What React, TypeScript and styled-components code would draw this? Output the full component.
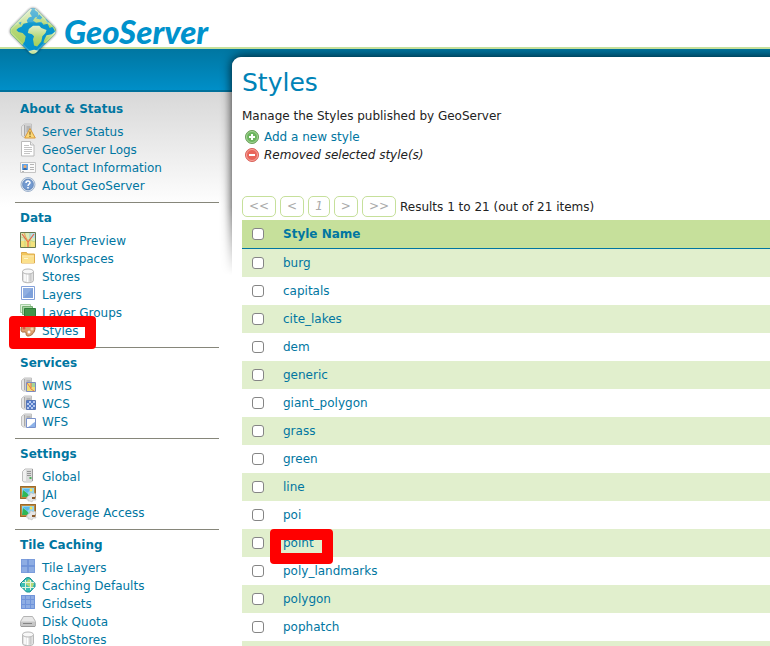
import React from "react";
import styled, { createGlobalStyle } from "styled-components";

const GlobalStyle = createGlobalStyle`
  * { box-sizing: border-box; }
  body {
    margin: 0;
    background: #fff;
    color: #222;
    font: 12px/18px "DejaVu Sans", Verdana, sans-serif;
  }
`;

const Page = styled.div`
  height: 100vh;
  overflow: hidden;
`;

const TopBar = styled.header`
  height: 49px;
  padding: 6px 8px 0;
  border-bottom: 2px solid #c6e09b;
  background: #fff;
`;

const Brand = styled.a`
  position: relative;
  z-index: 1;
  display: flex;
  align-items: center;
  gap: 6px;
  height: 50px;
  color: #0092cc;
  font: italic 900 33px/50px Lato, sans-serif;
  text-decoration: none;
`;

const Band = styled.div`
  height: 43px;
  border-bottom: 2px solid #00719b;
  background: linear-gradient(#0076a1, #008fc8);
`;

const Columns = styled.div`
  display: flex;
  align-items: flex-start;
  background: linear-gradient(#d8d8d8, #fff 115px);
`;

const Sidebar = styled.nav`
  flex: 0 0 232px;
  padding: 8px 13px 0 15px;
`;

const Section = styled.section`
  padding: 0 5px 7px;
  & + & {
    padding-top: 6px;
    border-top: 1px solid #86867a;
  }
`;

const SectionTitle = styled.h2`
  margin: 0 0 5px;
  color: #0076a1;
  font-size: 12px;
  line-height: 18px;
`;

const List = styled.ul`
  margin: 0;
  padding: 0;
  list-style: none;
`;

const MenuItem = styled.li`
  position: relative;
  display: flex;
  gap: 6px;
  height: 18px;
`;

const Link = styled.a`
  color: #0076a1;
  text-decoration: none;
`;

const Highlight = styled.span<{ $wide?: boolean }>`
  position: absolute;
  z-index: 2;
  top: ${(p) => (p.$wide ? "-6px" : "-5px")};
  left: ${(p) => (p.$wide ? "-11px" : "-13px")};
  width: ${(p) => (p.$wide ? "87px" : "63px")};
  height: ${(p) => (p.$wide ? "33px" : "35px")};
  border: 11px solid #f00;
  border-radius: 4px;
  pointer-events: none;
`;

const Main = styled.main`
  position: relative;
  flex: 1;
  min-width: 0;
  margin-top: -35px;
  padding: 11px 0 0 10px;
  border-top-left-radius: 9px;
  background: #fff;
`;

const ShadowArea = styled.div`
  position: absolute;
  top: -8px;
  right: 0;
  left: -14px;
  height: 226px;
  overflow: hidden;
  pointer-events: none;
  mask-image: linear-gradient(#000 70%, transparent);
  &::before {
    content: "";
    display: block;
    height: 300px;
    margin: 8px -20px 0 14px;
    border-radius: 9px;
    background: #fff;
    box-shadow: 0 0 11px rgba(0, 0, 0, 0.85);
  }
`;

const Content = styled.div`
  position: relative;
`;

const Title = styled.h1`
  margin: 0 0 9px;
  color: #0083b7;
  font-size: 25px;
  font-weight: 400;
  line-height: 30px;
`;

const Intro = styled.p`
  margin: 0 0 3px;
`;

const Actions = styled(List)`
  margin-bottom: 32px;
`;

const Action = styled.li`
  display: flex;
  align-items: center;
  gap: 4px;
  height: 18px;
  padding-left: 2px;
`;

const Pager = styled.div`
  display: flex;
  align-items: center;
  gap: 4px;
  margin-bottom: 3px;
`;

const PageButton = styled.button`
  height: 21px;
  padding: 0 6px;
  border: 1px solid #c6e09b;
  border-radius: 5px;
  background: #fff;
  color: #aaa;
  font: italic 12px/19px "DejaVu Sans", sans-serif;
`;

const Table = styled.table`
  width: 100%;
  border-collapse: separate;
  border-spacing: 0;
`;

const HeadCell = styled.th`
  height: 29px;
  padding: 0;
  border-bottom: 1px solid #0076a1;
  background: #c6e09b;
  color: #0076a1;
  text-align: left;
`;

const Row = styled.tr`
  &:nth-child(odd) { background: #e1efcd; }
`;

const Cell = styled.td`
  height: 28px;
  padding: 0;
`;

const CheckHead = styled(HeadCell)`
  width: 41px;
`;

const CellInner = styled.div`
  position: relative;
  height: 18px;
`;

const Check = styled.input`
  display: block;
  width: 12px;
  height: 12px;
  margin: 0 0 0 10px;
  appearance: none;
  border: 1px solid #858585;
  border-radius: 3px;
  background: #fff;
`;

const Drawing = styled.svg`
  display: block;
  flex: none;
  overflow: visible;
`;

const Logo = () => (
  <Drawing width="50" height="50" viewBox="1 1 48 48" aria-hidden="true">
    <defs>
      <linearGradient id="sea" x1="0" y1="0" x2="0" y2="1">
        <stop offset="0" stopColor="#57b3d2" />
        <stop offset=".4" stopColor="#0b97cd" />
        <stop offset="1" stopColor="#0091cc" />
      </linearGradient>
      <linearGradient id="land" x1="0" y1="0" x2="0" y2="1">
        <stop offset="0" stopColor="#e2efc8" />
        <stop offset=".55" stopColor="#b5d878" />
        <stop offset="1" stopColor="#a3cf56" />
      </linearGradient>
      <clipPath id="gem">
        <rect x="8" y="8" width="34" height="34" rx="5" transform="rotate(45 25 25)" />
      </clipPath>
      <filter id="glow" x="-20%" y="-20%" width="140%" height="140%">
        <feGaussianBlur stdDeviation="1.2" />
      </filter>
    </defs>
    <rect x="8" y="8" width="34" height="34" rx="5" transform="rotate(45 25 25)" fill="#222" opacity=".7" filter="url(#glow)" />
    <g clipPath="url(#gem)">
      <path d="M0 0h50v50H0z" fill="url(#sea)" />
      <g fill="url(#land)">
        <path d="M1 23 5 18l6-6 4-4 5-5 4 1-2 4 2 3-3 1-2 3 1 2-4 1-2 3-3 1-2 2 2 2 4 1 3 3-1 5-4 6-5-5-7-8z" />
        <path d="m27 0 6 3-1 3 4-1 14 14 0 5-4 1-2-4-3 1-2-4-4 1-2-3-5 1-3-2 2-3 3-1 0-4-3-2z" />
        <path d="m21 23 4-3 6 0 2 2 5 2-1 3-3 3-1 5-4 5-3-1-1-6 1-3-2-2-4-1z" />
        <path d="m36 33 2-4 5-1 4-3 1 4-6 7-4 1-3-1z" />
        <path d="m18 46 4-2 4-1 4 1 3-1-3 7h-9z" />
      </g>
      <path d="m31 9 3 3-2 2-4-1zm8 3 3 4-3 1-2-3zM11 17l3-1-1 3z" fill="#27a2cf" />
      <path d="M3 21 25 0l22 21Q25 12 3 21z" fill="#fff" opacity=".18" />
    </g>
    <rect x="9" y="9" width="32" height="32" rx="4" transform="rotate(45 25 25)" fill="none" stroke="#fff" strokeOpacity=".2" />
  </Drawing>
);

const ServerShape = () => (
  <>
    <path d="M1.5 3.5 4.5 1h7v12l-1.5 1H3.500l-2-1.500z" fill="#e6e6e6" stroke="#c0c0c0" />
    <path d="M5 1.500h6v12H5z" fill="#cfcfcf" />
    <path d="M6.500 4h4M6.500 6h4M6.500 8h4" stroke="#999" />
    <path d="M4.500 2v11" stroke="#aaa" />
  </>
);

const Cylinder = () => (
  <>
    <path d="M2.500 3.500v9c0 3 11 3 11 0v-9z" fill="#e2e2e2" stroke="#b8b8b8" />
    <path d="M5 5v8M7.500 6v8" stroke="#fff" strokeWidth="1.500" />
    <path d="M10.500 5v8.500" stroke="#cbcbcb" strokeWidth="2" />
    <ellipse cx="8" cy="3.500" rx="5.500" ry="2.500" fill="#f8f8f8" stroke="#b8b8b8" />
  </>
);

const Picture = () => (
  <>
    <path d="M1 1h14v11H1z" fill="#8dd6f2" stroke="#c08a42" strokeWidth="2" />
    <path d="M.5.500h15v12H.500z" fill="none" stroke="#9a6a2a" />
    <path d="m2 11 1-7 4 3 3 4z" fill="#2fb757" />
    <path d="M3 3h9L7 7z" fill="#58b8ea" />
    <circle cx="11" cy="4" r="1.500" fill="#f5e355" />
    <path d="m8 10 2-1 0-2 2 0 1 1 2-1 1 2-1 2 1 3-3 0-1 2-2-1-2 0 0-2-2 0z" fill="#e6e6e6" stroke="#bbb" strokeWidth=".6" />
    <path d="M12 11h3v2h-3z" fill="#8a5a2c" />
  </>
);

const icons: Record<string, React.ReactNode> = {
  status: (
    <>
      <ServerShape />
      <path d="m10 5.500 5.300 9.500H4.700z" fill="#fbd976" stroke="#d9983a" strokeLinejoin="round" />
      <path d="M10 8.500v3.200M10 12.700v1.300" stroke="#806028" strokeWidth="1.200" />
    </>
  ),
  logs: (
    <>
      <path d="M1.500.500h9l3.500 3.500v11H1.500z" fill="#fff" stroke="#bababa" />
      <path d="M10.500.500V4H14" fill="#eee" stroke="#bababa" />
      <path d="M4 4.500h5M4 6.500h8M4 8.500h8M4 10.500h8M4 12.500h6" stroke="#c4c4c4" />
    </>
  ),
  contact: (
    <>
      <path d="M.500 3.500h15v10H.500z" fill="#fafafa" stroke="#c4c4c4" />
      <path d="M2 5h6v6H2z" fill="#62a4e8" />
      <path d="M3 11c0-3 4-3 4 0z" fill="#386ca8" />
      <circle cx="5" cy="7.500" r="1.500" fill="#f0a868" />
      <path d="M10 5.500h4M10 8.500h4M10 10.500h4M2 12.500h2" stroke="#b4b4b4" />
    </>
  ),
  about: (
    <>
      <circle cx="8" cy="7.500" r="7" fill="#d4dfec" stroke="#a0b4ce" />
      <circle cx="8" cy="7.500" r="5.300" fill="#739ad0" stroke="#6388bb" />
      <path d="M6 6c0-2.500 4-2.500 4-.2C10 7.300 8 7 8 9" fill="none" stroke="#fff" strokeWidth="1.500" />
      <path d="M8 10v1.600" stroke="#fff" strokeWidth="1.500" />
    </>
  ),
  preview: (
    <>
      <path d="M.500.500h15v15H.500z" fill="#dcebb8" stroke="#687850" />
      <path d="M1 9h14v6H1z" fill="#f3e27c" />
      <path d="M9 1h6v5H9z" fill="#b7e0e7" />
      <path d="m1 5 14 5M5 1v14M10 1v14" stroke="#b9cf88" strokeWidth=".8" />
      <path d="m2 2 6 8 6-8M8 10v5" fill="none" stroke="#e8654a" strokeWidth="1.200" />
      <path d="m4 1 4 9" stroke="#f3953d" strokeWidth=".8" />
    </>
  ),
  folder: (
    <>
      <path d="M1.500 4.500v-2h5l1 1.500h7v9h-13z" fill="#f3c75c" stroke="#dfac4d" />
      <path d="M2 6.500h12V13H2z" fill="#fbe08c" />
      <path d="M2 6h12M4 8.500h4" stroke="#fff6ce" />
    </>
  ),
  store: <Cylinder />,
  layer: (
    <>
      <path d="M1.500.500h13v13h-13z" fill="#fff" stroke="#86a2da" />
      <path d="M3 2h10v10H3z" fill="#8faee1" />
      <path d="m3 12 10-10v10z" fill="#7da0da" />
    </>
  ),
  groups: (
    <>
      <path d="M.500.500h10v8H.500z" fill="#ddf1da" stroke="#a8cfa5" />
      <path d="M2.500 2.500h10v8h-10z" fill="#a4d1a0" stroke="#75ae72" />
      <path d="M4.500 4.500h11v8h-11z" fill="#44944a" stroke="#2e7d39" />
    </>
  ),
  palette: (
    <>
      <path d="M1 7c0-8 14-8 14-1 0 4-3 8-7 8-3 0-1-4-3-4s-4 1-4-3z" fill="#dba070" stroke="#a46538" />
      <circle cx="4" cy="6" r="1.500" fill="#e25048" />
      <circle cx="8" cy="4" r="1.300" fill="#5791d7" />
      <circle cx="12" cy="7" r="1.500" fill="#f2d9b0" />
      <circle cx="9" cy="10" r="1.500" fill="#fff" />
    </>
  ),
  wms: (
    <>
      <ServerShape />
      <path d="M6.500 5.500h9v9h-9z" fill="#f0dc72" stroke="#7d8cc0" />
      <path d="M11 6h4v4h-4z" fill="#a6d596" />
      <path d="m7 6 3 4 1 2 3 2M11 6v5" fill="none" stroke="#e8734f" />
    </>
  ),
  wcs: (
    <>
      <ServerShape />
      <path d="M6.500 5.500h9v9h-9z" fill="#b4c8f0" stroke="#5876b5" />
      <path d="M7 6h2v2H7zm4 0h2v2h-2zM9 8h2v2H9zm4 0h2v2h-2zM7 10h2v2H7zm4 0h2v2h-2zm-2 2h2v2H9zm4 0h2v2h-2z" fill="#527ac6" />
    </>
  ),
  wfs: (
    <>
      <ServerShape />
      <path d="M6.500 5.500h9v9h-9z" fill="#fff" stroke="#7a92cc" />
      <path d="M8 14c3-1 3-3 7-5v5z" fill="#8db2e9" />
    </>
  ),
  global: (
    <>
      <path d="M2.500 3.500 5 1h7.500v12L11 14H4l-1.500-1z" fill="#f0f0f0" stroke="#bdbdbd" />
      <path d="M6 1.500h6v12H6z" fill="#dadada" />
      <path d="M7 3.500h4M7 5.500h4M7 7.500h4" stroke="#959595" />
      <path d="M9.500 10h2" stroke="#4caf5a" strokeWidth="2" />
      <path d="M12.500 1v12" stroke="#9b9b9b" />
    </>
  ),
  picture: <Picture />,
  tiles: (
    <>
      <path d="M1 0h14v14H1z" fill="#7c9ddc" />
      <path d="M2 1h5v5H2zM9 1h5v5H9zM2 8h5v5H2zM9 8h5v5H9z" fill="#8eade3" />
      <path d="M8 0v14M1 7h14" stroke="#6a8fd6" />
    </>
  ),
  globe: (
    <>
      <path d="m8 .500 2 .500 5 5.500v3L10 15H6.500L.500 9V6.500L6 1z" fill="#3dbfb4" stroke="#168f91" />
      <path d="m9 2 5 5-2 4-4-2-3-3z" fill="#b8d878" />
      <path d="M5.500 3v10M10.500 3v10M2 5.500h12M2 10.500h12" stroke="#e2f4e0" />
    </>
  ),
  grid: (
    <>
      <path d="M1 0h14v14H1z" fill="#8eade3" />
      <path d="M1.500.500h13v13h-13zM5.500 0v14M10.500 0v14M1 4.500h14M1 9.500h14" fill="none" stroke="#7094da" />
    </>
  ),
  disk: (
    <>
      <path d="M3.500 3.500.500 8.500V13h15V8.500l-3-5z" fill="#e8e8e8" stroke="#b4b4b4" />
      <path d="M1 8.500h14V13H1z" fill="#c6c6c6" />
      <path d="M3 10.500h9" stroke="#858585" />
      <path d="M1 13.500h14" stroke="#9a9a9a" />
    </>
  ),
  add: (
    <>
      <circle cx="8" cy="8" r="6.500" fill="#6cb45e" stroke="#6d9f5c" />
      <circle cx="8" cy="8" r="5.500" fill="none" stroke="#a6d698" />
      <path d="M8 5v6M5 8h6" stroke="#fff" strokeWidth="2" />
    </>
  ),
  remove: (
    <>
      <circle cx="8" cy="8" r="6.500" fill="#e96459" stroke="#d9655d" />
      <circle cx="8" cy="8" r="5.500" fill="none" stroke="#f6a29a" />
      <path d="M5 8h6" stroke="#fff" strokeWidth="2" />
    </>
  ),
};

const Icon = ({ name }: { name: string }) => (
  <Drawing width="16" height="16" viewBox="0 0 16 16" aria-hidden="true">
    {icons[name]}
  </Drawing>
);

const menu: { title: string; items: [string, string][] }[] = [
  {
    title: "About & Status",
    items: [["status", "Server Status"], ["logs", "GeoServer Logs"], ["contact", "Contact Information"], ["about", "About GeoServer"]],
  },
  {
    title: "Data",
    items: [["preview", "Layer Preview"], ["folder", "Workspaces"], ["store", "Stores"], ["layer", "Layers"], ["groups", "Layer Groups"], ["palette", "Styles"]],
  },
  { title: "Services", items: [["wms", "WMS"], ["wcs", "WCS"], ["wfs", "WFS"]] },
  { title: "Settings", items: [["global", "Global"], ["picture", "JAI"], ["picture", "Coverage Access"]] },
  {
    title: "Tile Caching",
    items: [["tiles", "Tile Layers"], ["globe", "Caching Defaults"], ["grid", "Gridsets"], ["disk", "Disk Quota"], ["store", "BlobStores"]],
  },
];

const styleNames = [
  "burg", "capitals", "cite_lakes", "dem", "generic", "giant_polygon", "grass",
  "green", "line", "poi", "point", "poly_landmarks", "polygon", "pophatch",
];

export default function App() {
  return (
    <>
      <GlobalStyle />
      <Page>
        <TopBar>
          <Brand href="#">
            <Logo />
            GeoServer
          </Brand>
        </TopBar>
        <Band />
        <Columns>
          <Sidebar>
            {menu.map((section) => (
              <Section key={section.title}>
                <SectionTitle>{section.title}</SectionTitle>
                <List>
                  {section.items.map(([icon, label]) => (
                    <MenuItem key={label}>
                      <Icon name={icon} />
                      <Link href="#">{label}</Link>
                      {label === "Styles" && <Highlight $wide />}
                    </MenuItem>
                  ))}
                </List>
              </Section>
            ))}
          </Sidebar>
          <Main>
            <ShadowArea />
            <Content>
              <Title>Styles</Title>
              <Intro>Manage the Styles published by GeoServer</Intro>
              <Actions>
                <Action>
                  <Icon name="add" />
                  <Link href="#">Add a new style</Link>
                </Action>
                <Action>
                  <Icon name="remove" />
                  <em>Removed selected style(s)</em>
                </Action>
              </Actions>
              <Pager>
                {["<<", "<", "1", ">", ">>"].map((label) => (
                  <PageButton key={label} type="button">{label}</PageButton>
                ))}
                <span>Results 1 to 21 (out of 21 items)</span>
              </Pager>
              <Table>
                <thead>
                  <tr>
                    <CheckHead><Check type="checkbox" aria-label="Select all styles" /></CheckHead>
                    <HeadCell>Style Name</HeadCell>
                  </tr>
                </thead>
                <tbody>
                  {styleNames.map((name) => (
                    <Row key={name}>
                      <Cell><Check type="checkbox" aria-label={`Select ${name}`} /></Cell>
                      <Cell>
                        <CellInner>
                          <Link href="#">{name}</Link>
                          {name === "point" && <Highlight />}
                        </CellInner>
                      </Cell>
                    </Row>
                  ))}
                </tbody>
                <tfoot>
                  <Row><Cell colSpan={2} /></Row>
                </tfoot>
              </Table>
            </Content>
          </Main>
        </Columns>
      </Page>
    </>
  );
}
